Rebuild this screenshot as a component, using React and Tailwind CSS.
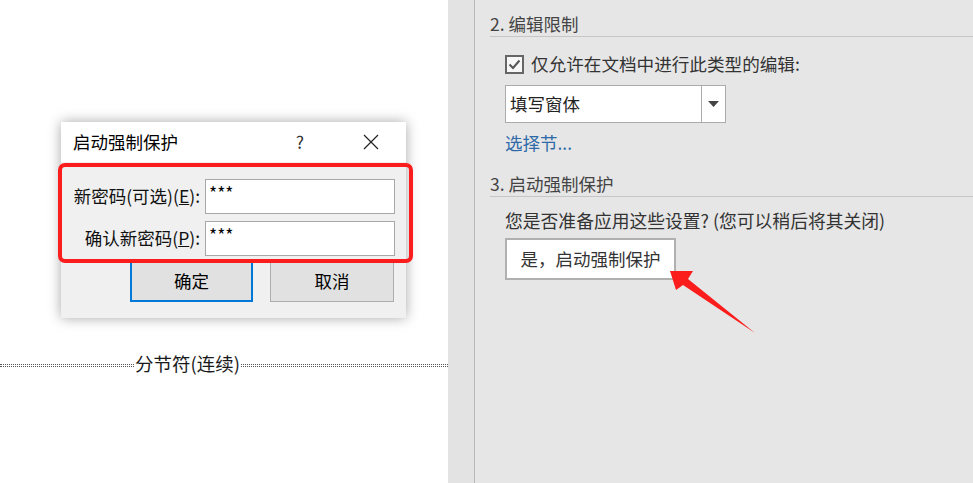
const font = { fontFamily: '"Noto Sans CJK SC", "Noto Sans", sans-serif' };

// Password prompt window shown over the document
function ProtectDialog() {
    return (
        <div className="absolute left-[61px] top-[122px] w-[345px] h-[196px] bg-[#f0f0f0] shadow-[0_0_12px_rgba(0,0,0,0.35)] flex flex-col">
            {/* Title bar */}
            <div className="h-[40px] bg-white flex items-center pl-[12px] text-[17.5px] text-black">
                <span className="flex-1">启动强制保护</span>
                <span className="w-[20px] text-center mr-[53px] text-[#333]">?</span>
                <svg width="16" height="16" viewBox="0 0 16 16" className="mr-[27px]">
                    <path d="M1 1L15 15M15 1L1 15" stroke="#222" strokeWidth="1.2" />
                </svg>
            </div>

            {/* Fields */}
            <div className="flex flex-col gap-[7px] pt-[17px] pr-[11px]">
                <div className="flex items-center h-[35px]">
                    <label className="w-[144px] text-right pr-[5px] text-[17.5px] text-[#111] whitespace-nowrap">
                        新密码(可选)(<span className="underline">E</span>):
                    </label>
                    <div className="flex-1 h-[35px] bg-white border border-[#a8a8a8] pl-[3px] text-[17.5px] leading-[26px] text-black">***</div>
                </div>
                <div className="flex items-center h-[35px]">
                    <label className="w-[144px] text-right pr-[5px] text-[17.5px] text-[#111] whitespace-nowrap">
                        确认新密码(<span className="underline">P</span>):
                    </label>
                    <div className="flex-1 h-[35px] bg-white border border-[#a8a8a8] pl-[3px] text-[17.5px] leading-[26px] text-black">***</div>
                </div>
            </div>

            {/* Buttons */}
            <div className="flex gap-[17px] pl-[69px] mt-[4px]">
                <button className="w-[123px] h-[42px] bg-[#e1e1e1] border-2 border-[#0078d7] text-[17.5px] text-black">确定</button>
                <button className="w-[124px] h-[42px] bg-[#e1e1e1] border border-[#adadad] text-[17.5px] text-black">取消</button>
            </div>
        </div>
    );
}

function PaneHeading({ children }) {
    return (
        <div className="h-[25px] leading-[24px] border-b border-[#c6c6c6] text-[17.5px] text-[#444]">
            {children}
        </div>
    );
}

export default function App() {
    return (
        <div className="relative w-[973px] h-[483px] flex overflow-hidden bg-white" style={font}>
            {/* Document page */}
            <div className="w-[448px] h-full bg-white pt-[351px]">
                <div className="flex items-center h-[24px]">
                    <div className="w-[134px] h-[3px] border-y border-dotted border-[#555] mt-[4px]" />
                    <span className="px-[1px] text-[18.5px] leading-[24px] text-[#1a1a1a] whitespace-nowrap">分节符(连续)</span>
                    <div className="flex-1 h-[3px] border-y border-dotted border-[#555] mt-[4px]" />
                </div>
            </div>

            {/* Splitter */}
            <div className="w-[27px] h-full bg-[#e3e3e3] border-r border-[#b9b9b9]" />

            {/* Restrict editing pane */}
            <div className="flex-1 h-full bg-[#e6e6e6] pl-[15px] pt-[12px]">
                <PaneHeading>2. 编辑限制</PaneHeading>

                <div className="pl-[15px]">
                    <div className="flex items-center gap-[7px] mt-[15px] h-[24px]">
                        <div className="w-[19px] h-[19px] border-2 border-[#666] bg-[#f7f7f7] flex items-center justify-center">
                            <svg width="13" height="11" viewBox="0 0 13 11">
                                <path d="M1.5 5.5L5 9L11.5 1.5" fill="none" stroke="#555" strokeWidth="2" />
                            </svg>
                        </div>
                        <span className="text-[17.6px] text-[#333]">仅允许在文档中进行此类型的编辑:</span>
                    </div>

                    <div className="mt-[9px] w-[221px] h-[38px] bg-white border border-[#ababab] flex">
                        <div className="flex-1 pl-[4px] text-[17.5px] leading-[36px] text-[#222]">填写窗体</div>
                        <div className="w-[24px] border-l border-[#ababab] flex items-center justify-center">
                            <svg width="11" height="6" viewBox="0 0 11 6">
                                <path d="M0 0H11L5.5 6Z" fill="#444" />
                            </svg>
                        </div>
                    </div>

                    <div className="mt-[8px] text-[17.5px] leading-[24px] text-[#2f6aa8]">选择节...</div>
                </div>

                <div className="mt-[17px]">
                    <PaneHeading>3. 启动强制保护</PaneHeading>
                </div>

                <div className="pl-[15px]">
                    <div className="mt-[11px] text-[17.8px] leading-[24px] text-[#333] whitespace-nowrap">您是否准备应用这些设置? (您可以稍后将其关闭)</div>
                    <button className="mt-[6px] w-[171px] h-[42px] bg-white border-2 border-[#b0b0b0] text-[17.5px] text-[#333]">
                        是，启动强制保护
                    </button>
                </div>
            </div>

            <ProtectDialog />

            {/* Red highlight around the password fields */}
            <div className="absolute left-[58px] top-[163px] w-[355px] h-[100px] border-4 border-[#fb1c1c] rounded-[7px]" />

            {/* Red pointer arrow */}
            <svg className="absolute left-0 top-0 pointer-events-none" width="973" height="483">
                <polygon points="670,271 693,271 688,279 755,333 683,285 676,290" fill="#fb1c1c" />
            </svg>
        </div>
    );
}
